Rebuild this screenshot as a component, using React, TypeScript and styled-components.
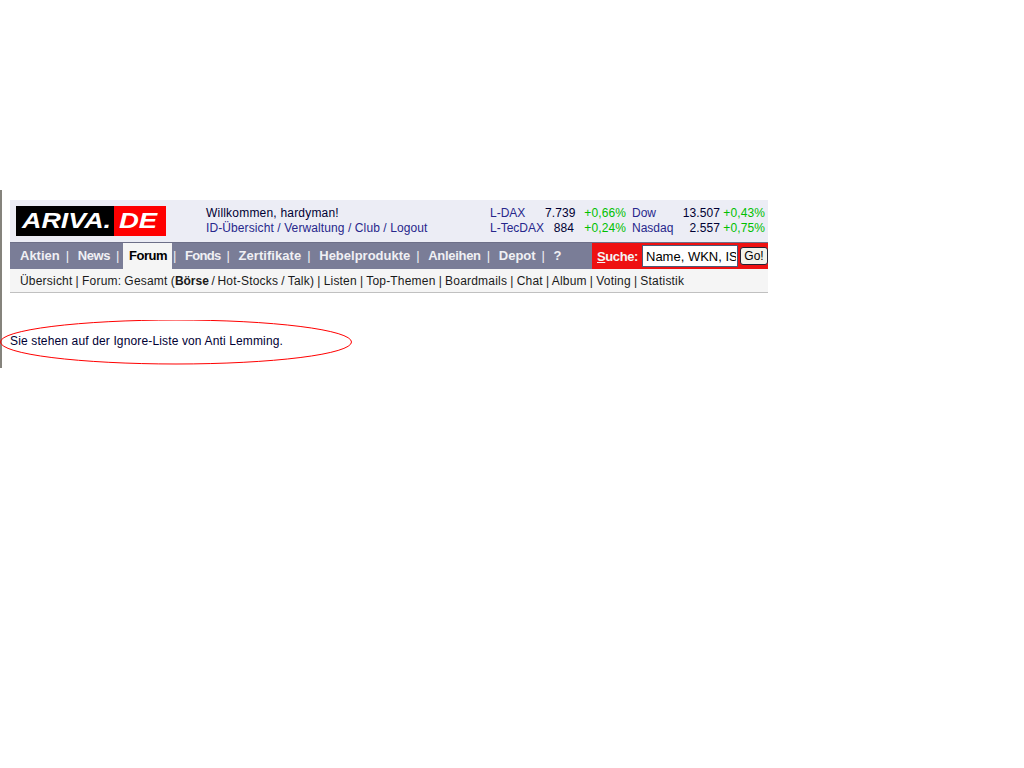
import { Fragment } from "react"
import styled, { createGlobalStyle } from "styled-components"

const Global = createGlobalStyle`
  html, body {
    margin: 0;
    padding: 0;
    background: #fff;
    font-family: "Liberation Sans", Arial, sans-serif;
    font-size: 12px;
    color: #000;
  }
`

const Page = styled.div`
  padding-top: 190px;
  width: 768px;
`

const Frame = styled.div`
  position: relative;
  height: 178px;
  box-sizing: border-box;
  border-left: 2px solid #85837c;
  padding: 10px 0 0 8px;
`

const TopBar = styled.div`
  height: 42px;
  background: #ecedf5;
  display: flex;
  align-items: center;
  box-sizing: border-box;
  padding-left: 6px;
`

const Logo = styled.div`
  flex: none;
  width: 150px;
  height: 30px;
  display: flex;
  font-style: italic;
  font-weight: 700;
  font-size: 22px;
  line-height: 30px;
  color: #fff;
`

const LogoPart = styled.div<{ $red?: boolean }>`
  width: ${(p) => (p.$red ? "52px" : "98px")};
  background: ${(p) => (p.$red ? "#f00" : "#000")};
  padding-left: ${(p) => (p.$red ? "5px" : "6px")};
  box-sizing: border-box;
  white-space: nowrap;
  overflow: hidden;
`

const LogoText = styled.span<{ $stretch: number }>`
  display: inline-block;
  transform: scaleX(${(p) => p.$stretch});
  transform-origin: left center;
`

const Welcome = styled.div`
  flex: none;
  margin-left: 40px;
  width: 284px;
  line-height: 15px;
  color: #000033;
  letter-spacing: 0.2px;
`

const BlueLink = styled.a`
  color: #27278c;
  letter-spacing: 0.1px;
`

const Quotes = styled.div`
  display: grid;
  grid-template-columns: 55px 29px 52px 50px 44px 45px;
  line-height: 15px;
  letter-spacing: 0.1px;
`

const QName = styled.span<{ $second?: boolean }>`
  color: #27278c;
  white-space: nowrap;
  letter-spacing: 0;
  padding-left: ${(p) => (p.$second ? "6px" : 0)};
`

const QValue = styled.span`
  text-align: right;
  color: #000033;
`

const QChange = styled.span`
  text-align: right;
  color: #00c000;
`

const NavBar = styled.div`
  height: 27px;
  background: #7a7d97;
  border-top: 1px solid #6d6f88;
  box-sizing: border-box;
  display: flex;
  justify-content: space-between;
`

const NavItems = styled.div`
  display: flex;
  padding-left: 5px;
`

const NavItem = styled.div<{ $active?: boolean; $track: number }>`
  height: 26px;
  box-sizing: border-box;
  padding: ${(p) => (p.$active ? "4px 5px 0 6px" : "4px 5px 0")};
  font-size: 13px;
  font-weight: 700;
  letter-spacing: ${(p) => p.$track}px;
  line-height: 17px;
  color: ${(p) => (p.$active ? "#000" : "#f0f0f4")};
  background: ${(p) => (p.$active ? "#f5f5f5" : "transparent")};
  white-space: nowrap;
`

const Sep = styled.span`
  width: 3px;
  margin: 0 4px 0 1px;
  padding-top: 4px;
  font-size: 13px;
  line-height: 17px;
  color: #f0f0f4;
`

const Search = styled.form`
  width: 176px;
  height: 26px;
  background: #ee1111;
  display: flex;
  align-items: center;
  box-sizing: border-box;
  padding-left: 5px;
  margin: 0;
`

const SearchLabel = styled.label`
  flex: none;
  width: 45px;
  color: #f4f4f4;
  font-size: 13px;
  font-weight: 700;
  letter-spacing: -0.4px;
  white-space: nowrap;
`

const SearchInput = styled.input`
  width: 96px;
  height: 22px;
  box-sizing: border-box;
  border: 1px solid #4a5a78;
  padding: 0 1px 0 3px;
  font-family: "Liberation Sans", Arial, sans-serif;
  font-size: 13px;
  color: #000;
  background: #fff;
  margin: 0 2px 0 0;
`

const GoButton = styled.button`
  width: 28px;
  height: 18px;
  box-sizing: border-box;
  padding: 0;
  border: 1px solid #223;
  border-radius: 3px;
  background: #f2f2ea;
  font-family: "Liberation Sans", Arial, sans-serif;
  font-size: 12px;
  line-height: 15px;
  color: #000;
`

const SubNav = styled.div`
  height: 24px;
  box-sizing: border-box;
  background: #f5f5f5;
  border-bottom: 1px solid #c0c0c0;
  padding: 5px 0 0 10px;
  line-height: 15px;
  color: #1a1a1a;
  letter-spacing: 0.2px;
  word-spacing: -0.42px;
  white-space: nowrap;
`

const Market = styled.span`
  word-spacing: -1px;
`

const MarketCurrent = styled.b`
  letter-spacing: 0;
`

const Notice = styled.p`
  margin: 41px 0 0;
  line-height: 15px;
  color: #000033;
  letter-spacing: 0.14px;
`

const Ring = styled.svg`
  position: absolute;
  left: -2px;
  top: 130px;
`

const subLinks = ["Listen", "Top-Themen", "Boardmails", "Chat", "Album", "Voting", "Statistik"]
const navItems = [
  { label: "Aktien", track: 0 },
  { label: "News", track: -0.4 },
  { label: "Forum", track: -0.5 },
  { label: "Fonds", track: -0.7 },
  { label: "Zertifikate", track: 0.05 },
  { label: "Hebelprodukte", track: 0 },
  { label: "Anleihen", track: -0.3 },
  { label: "Depot", track: 0 },
  { label: "?", track: 0 },
]

export default function App() {
  return (
    <Page>
      <Global />
      <Frame>
        <TopBar>
          <Logo>
            <LogoPart>
              <LogoText $stretch={1.22}>ARIVA.</LogoText>
            </LogoPart>
            <LogoPart $red>
              <LogoText $stretch={1.25}>DE</LogoText>
            </LogoPart>
          </Logo>
          <Welcome>
            Willkommen, hardyman!
            <br />
            <BlueLink>ID-Übersicht / Verwaltung / Club / Logout</BlueLink>
          </Welcome>
          <Quotes>
            <QName>L-DAX</QName>
            <QValue>7.739</QValue>
            <QChange>+0,66%</QChange>
            <QName $second>Dow</QName>
            <QValue>13.507</QValue>
            <QChange>+0,43%</QChange>
            <QName>L-TecDAX</QName>
            <QValue>884</QValue>
            <QChange>+0,24%</QChange>
            <QName $second>Nasdaq</QName>
            <QValue>2.557</QValue>
            <QChange>+0,75%</QChange>
          </Quotes>
        </TopBar>
        <NavBar>
          <NavItems>
            {navItems.map((item, i) => (
              <Fragment key={item.label}>
                <NavItem $active={item.label === "Forum"} $track={item.track}>
                  {item.label}
                </NavItem>
                {i < navItems.length - 1 && <Sep>|</Sep>}
              </Fragment>
            ))}
          </NavItems>
          <Search>
            <SearchLabel>
              <u>S</u>uche:
            </SearchLabel>
            <SearchInput defaultValue="Name, WKN, ISIN" />
            <GoButton type="button">Go!</GoButton>
          </Search>
        </NavBar>
        <SubNav>
          Übersicht | Forum: Gesamt (
          <Market>
            <MarketCurrent>Börse</MarketCurrent> / Hot-Stocks
          </Market>{" "}
          / Talk)
          {subLinks.map((l) => ` | ${l}`).join("")}
        </SubNav>
        <Notice>Sie stehen auf der Ignore-Liste von Anti Lemming.</Notice>
        <Ring width="354" height="46" viewBox="0 0 354 46">
          <ellipse cx="176" cy="22" rx="175.5" ry="22" fill="none" stroke="#f00" strokeWidth="1" />
        </Ring>
      </Frame>
    </Page>
  )
}
